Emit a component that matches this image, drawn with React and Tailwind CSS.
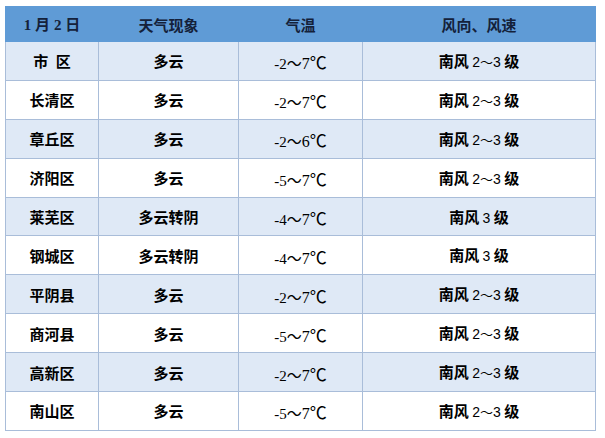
const rows = [
  { area: '市\u2002区', sky: '多云', lo: '-2', hi: '7', wind: ['2', '3'] },
  { area: '长清区', sky: '多云', lo: '-2', hi: '7', wind: ['2', '3'] },
  { area: '章丘区', sky: '多云', lo: '-2', hi: '6', wind: ['2', '3'] },
  { area: '济阳区', sky: '多云', lo: '-5', hi: '7', wind: ['2', '3'] },
  { area: '莱芜区', sky: '多云转阴', lo: '-4', hi: '7', wind: ['3'] },
  { area: '钢城区', sky: '多云转阴', lo: '-4', hi: '7', wind: ['3'] },
  { area: '平阴县', sky: '多云', lo: '-2', hi: '7', wind: ['2', '3'] },
  { area: '商河县', sky: '多云', lo: '-5', hi: '7', wind: ['2', '3'] },
  { area: '高新区', sky: '多云', lo: '-2', hi: '7', wind: ['2', '3'] },
  { area: '南山区', sky: '多云', lo: '-5', hi: '7', wind: ['2', '3'] },
];

const cjk = "font-['Noto_Sans_CJK_SC',sans-serif]";
const serif = "font-['Liberation_Serif',serif]";

export default function App() {
  return (
    <div className="w-[605px] h-[438px] bg-white pt-[6px] pl-[5px]">
      <table className={`border-collapse table-fixed w-[590px] text-[15px] text-black ${cjk}`}>
        <colgroup>
          <col className="w-[93px]" />
          <col className="w-[140px]" />
          <col className="w-[124px]" />
          <col className="w-[233px]" />
        </colgroup>
        <thead>
          <tr className="h-[35px] bg-[#5f9bd6] text-[#14213a] font-bold">
            <th className="p-0 border border-[#5f9bd6] leading-none">
              <span className={serif}>1 </span>月<span className={serif}> 2 </span>日
            </th>
            <th className="p-0 border border-[#5f9bd6] leading-none">天气现象</th>
            <th className="p-0 border border-[#5f9bd6] leading-none">气温</th>
            <th className="p-0 border border-[#5f9bd6] leading-none">风向、风速</th>
          </tr>
        </thead>
        <tbody>
          {rows.map((r, i) => (
            <tr key={i} className={`h-[38.9px] ${i % 2 === 0 ? 'bg-[#dfe9f6]' : 'bg-white'}`}>
              <td className="p-0 border border-[#a9bdd9] text-center font-bold leading-none whitespace-pre">{r.area}</td>
              <td className="p-0 border border-[#a9bdd9] text-center font-bold leading-none">{r.sky}</td>
              <td className="p-0 pt-[4px] border border-[#a9bdd9] text-center leading-none">
                <span className={`${serif} text-[15px]`}>{r.lo}</span>
                <span className="font-normal text-[15px]">～</span>
                <span className={`${serif} text-[16px]`}>{r.hi}</span>
                <span className="font-normal text-[17px]">℃</span>
              </td>
              <td className="p-0 border border-[#a9bdd9] text-center leading-none">
                <span className="font-bold">南风 </span>
                <span className="font-['Liberation_Sans',sans-serif] text-[14px]">{r.wind[0]}</span>
                {r.wind[1] && (
                  <>
                    <span className="font-normal text-[13px]">～</span>
                    <span className="font-['Liberation_Sans',sans-serif] text-[14px]">{r.wind[1]}</span>
                  </>
                )}
                <span className="font-bold"> 级</span>
              </td>
            </tr>
          ))}
        </tbody>
      </table>
    </div>
  );
}
